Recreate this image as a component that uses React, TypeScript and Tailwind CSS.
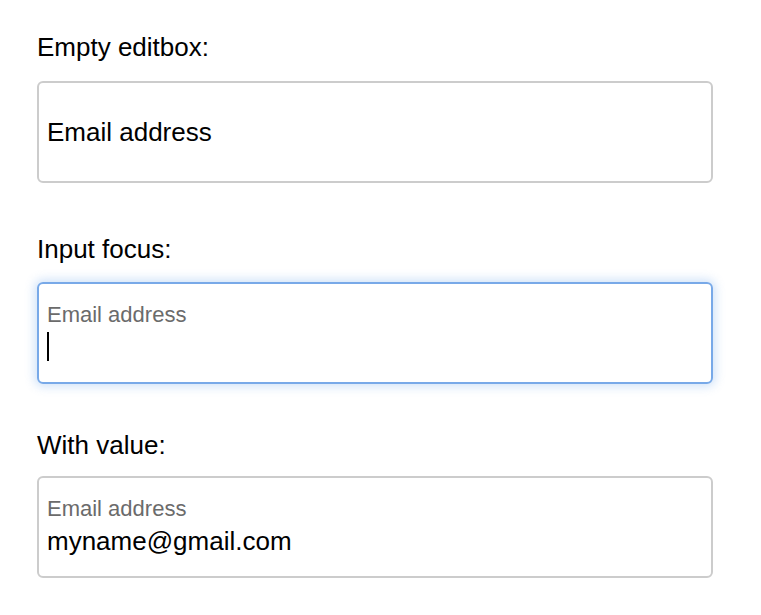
const font = { fontFamily: '"Liberation Sans", Arial, sans-serif' };

export default function App() {
  return (
    <div className="min-h-screen bg-white px-[37px] pt-[33px] text-black" style={font}>
      <div className="w-[676px]">
        <div className="text-[26px] leading-[28px]">Empty editbox:</div>
        <div className="mt-[20px] flex h-[102px] items-center rounded-[6px] border-2 border-[#cccccc] px-[8px]">
          <span className="text-[26px] leading-[28px]">Email address</span>
        </div>

        <div className="mt-[52px] text-[26px] leading-[28px]">Input focus:</div>
        <div className="mt-[19px] h-[102px] rounded-[6px] border-2 border-[#78a9e8] px-[8px] pt-[19px] shadow-[0_0_10px_3px_rgba(110,165,235,0.3)]">
          <div className="text-[22px] leading-[24px] text-[#6b6b6b]">Email address</div>
          <div className="mt-[5px] h-[29px] w-[2px] bg-black"></div>
        </div>

        <div className="mt-[47px] text-[26px] leading-[28px]">With value:</div>
        <div className="mt-[17px] h-[102px] rounded-[6px] border-2 border-[#cccccc] px-[8px] pt-[19px]">
          <div className="text-[22px] leading-[24px] text-[#6b6b6b]">Email address</div>
          <div className="mt-[6px] text-[26px] leading-[28px]">myname@gmail.com</div>
        </div>
      </div>
    </div>
  );
}
